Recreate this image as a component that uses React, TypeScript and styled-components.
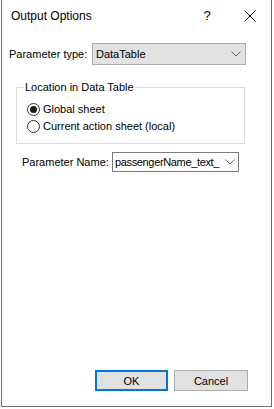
import React from "react";
import styled, { createGlobalStyle } from "styled-components";

const Global = createGlobalStyle`
  html, body { margin: 0; padding: 0; background: #ffffff; }
  body { font-family: "Liberation Sans", Arial, sans-serif; font-size: 11px; color: #000; }
`;

const Win = styled.div`
  box-sizing: border-box;
  margin-left: 1px;
  width: 271px;
  height: 407px;
  border: 1px solid #6e6e6e;
  border-top: none;
  background: #fff;
  display: flex;
  flex-direction: column;
`;

const TitleBar = styled.div`
  height: 31px;
  display: flex;
  align-items: center;
  padding-left: 9px;
  font-family: "Liberation Sans", Arial, sans-serif;
  font-size: 12px;
`;

const Title = styled.span`
  flex: 1;
  margin-top: 1px;
`;

const HelpBtn = styled.span`
  width: 14px;
  font-size: 13px;
  margin-right: 30px;
  text-align: center;
`;

const CloseBtn = styled.span`
  width: 12px;
  height: 12px;
  margin-right: 15px;
  display: flex;
`;

const Body = styled.div`
  flex: 1;
  display: flex;
  flex-direction: column;
`;

const Row = styled.div<{ $top: number; $left: number }>`
  display: flex;
  align-items: center;
  margin-top: ${(p) => p.$top}px;
  padding-left: ${(p) => p.$left}px;
`;

const Label = styled.span<{ $w: number }>`
  width: ${(p) => p.$w}px;
  white-space: nowrap;
`;

const Combo = styled.div<{ $w: number; $h: number; $flat?: boolean }>`
  box-sizing: border-box;
  width: ${(p) => p.$w}px;
  height: ${(p) => p.$h}px;
  border: 1px solid ${(p) => (p.$flat ? "#7a7a7a" : "#adadad")};
  background: ${(p) => (p.$flat ? "#fff" : "#e1e1e1")};
  display: flex;
  align-items: center;
  padding-left: ${(p) => (p.$flat ? 2 : 3)}px;
  overflow: hidden;
`;

const ComboText = styled.span<{ $tight?: boolean }>`
  flex: 1;
  white-space: nowrap;
  letter-spacing: ${(p) => (p.$tight ? "-0.35px" : "0")};
`;

const Chevron = styled.span<{ $w: number }>`
  width: ${(p) => p.$w}px;
  display: flex;
  justify-content: center;
  flex-shrink: 0;
`;

const Group = styled.fieldset`
  box-sizing: border-box;
  margin: 16px 0 0 14px;
  width: 229px;
  height: 63px;
  border: 1px solid #dcdcdc;
  padding: 0 0 0 10px;
`;

const Legend = styled.legend`
  padding: 0 1px;
  margin-left: -3px;
  line-height: 13px;
`;

const RadioRow = styled.label<{ $top: number }>`
  display: flex;
  align-items: center;
  height: 16px;
  margin-top: ${(p) => p.$top}px;
`;

const RadioCircle = styled.span<{ $on?: boolean }>`
  box-sizing: border-box;
  width: 13px;
  height: 13px;
  border-radius: 50%;
  border: 1px solid #333;
  background: #fff;
  display: flex;
  align-items: center;
  justify-content: center;
  margin-right: 3px;
  &::after {
    content: "";
    width: 7px;
    height: 7px;
    border-radius: 50%;
    background: ${(p) => (p.$on ? "#1a1a1a" : "transparent")};
  }
`;

const Buttons = styled.div`
  margin-top: auto;
  display: flex;
  justify-content: flex-end;
  gap: 6px;
  padding: 0 23px 15px 0;
`;

const Btn = styled.button<{ $def?: boolean }>`
  box-sizing: border-box;
  width: ${(p) => (p.$def ? 73 : 74)}px;
  height: 21px;
  font-family: "Liberation Sans", Arial, sans-serif;
  font-size: 11px;
  color: #000;
  background: #e1e1e1;
  border: ${(p) => (p.$def ? "2px solid #0078d7" : "1px solid #adadad")};
  padding: 0;
`;

const Chev = () => (
  <svg width="10" height="6" viewBox="0 0 10 6">
    <path d="M0.5 0.5 L5 5 L9.5 0.5" fill="none" stroke="#606060" strokeWidth="1" />
  </svg>
);

export default function App() {
  return (
    <>
      <Global />
      <Win>
        <TitleBar>
          <Title>Output Options</Title>
          <HelpBtn>?</HelpBtn>
          <CloseBtn>
            <svg width="12" height="12" viewBox="0 0 12 12">
              <path d="M0.5 0.5 L11.5 11.5 M11.5 0.5 L0.5 11.5" stroke="#000" strokeWidth="1" />
            </svg>
          </CloseBtn>
        </TitleBar>
        <Body>
          <Row $top={12} $left={7}>
            <Label $w={83}>Parameter type:</Label>
            <Combo $w={154} $h={22}>
              <ComboText>DataTable</ComboText>
              <Chevron $w={18}><Chev /></Chevron>
            </Combo>
          </Row>
          <Group>
            <Legend>Location in Data Table</Legend>
            <RadioRow $top={7}>
              <RadioCircle $on />
              Global sheet
            </RadioRow>
            <RadioRow $top={1}>
              <RadioCircle />
              Current action sheet (local)
            </RadioRow>
          </Group>
          <Row $top={8} $left={20}>
            <Label $w={90}>Parameter Name:</Label>
            <Combo $w={127} $h={20} $flat>
              <ComboText $tight>passengerName_text_</ComboText>
              <Chevron $w={16}><Chev /></Chevron>
            </Combo>
          </Row>
          <Buttons>
            <Btn $def>OK</Btn>
            <Btn>Cancel</Btn>
          </Buttons>
        </Body>
      </Win>
    </>
  );
}
